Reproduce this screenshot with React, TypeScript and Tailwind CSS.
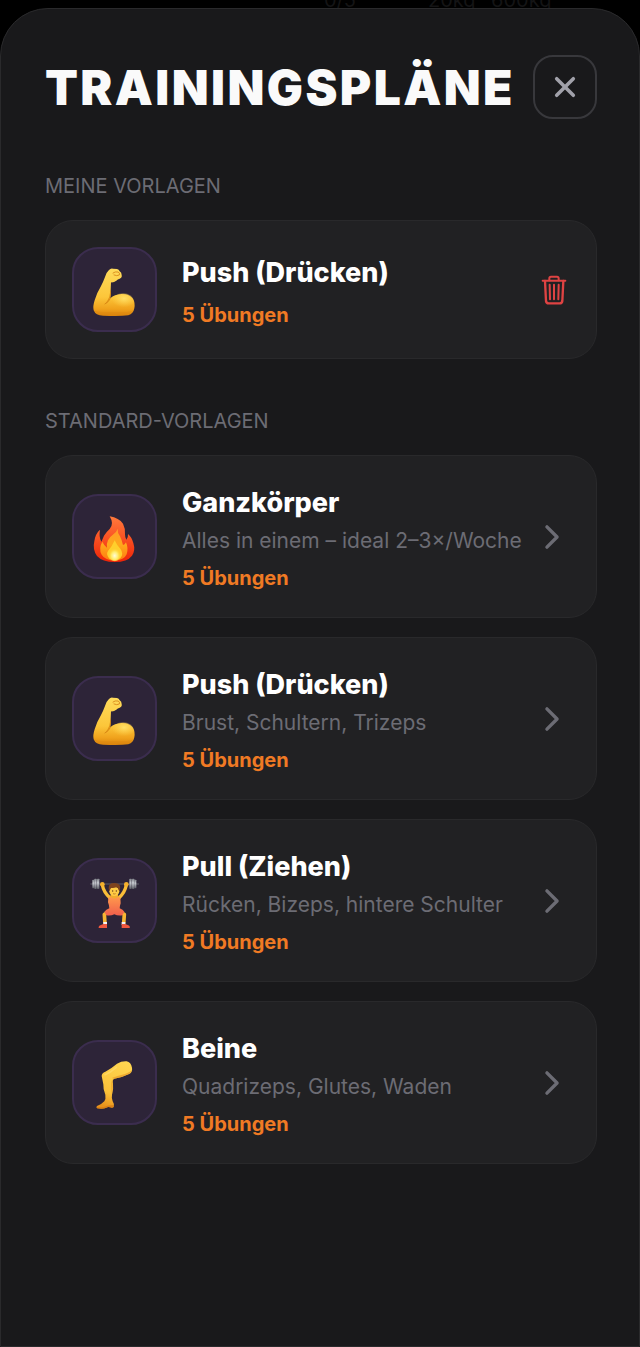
import React from 'react';
import { IoChevronForward, IoClose } from 'react-icons/io5';

type IconName = 'arm' | 'fire' | 'lifter' | 'leg';

interface Plan {
  id: string;
  name: string;
  description?: string;
  exercises: number;
  icon: IconName;
}

const myPlans: Plan[] = [
  { id: 'my-push', name: 'Push (Drücken)', exercises: 5, icon: 'arm' },
];

const defaultPlans: Plan[] = [
  { id: 'full', name: 'Ganzkörper', description: 'Alles in einem – ideal 2–3×/Woche', exercises: 5, icon: 'fire' },
  { id: 'push', name: 'Push (Drücken)', description: 'Brust, Schultern, Trizeps', exercises: 5, icon: 'arm' },
  { id: 'pull', name: 'Pull (Ziehen)', description: 'Rücken, Bizeps, hintere Schulter', exercises: 5, icon: 'lifter' },
  { id: 'legs', name: 'Beine', description: 'Quadrizeps, Glutes, Waden', exercises: 5, icon: 'leg' },
];

const TrashIcon = () => (
  <svg viewBox="55 191 96 96" className="size-8" fill="none" stroke="currentColor" strokeLinecap="round" strokeLinejoin="round" aria-hidden="true">
    <path d="M69 211 H137" strokeWidth="6" />
    <path d="M89 210 V204 Q89 199 94 199 H112 Q117 199 117 204 V210" strokeWidth="6" />
    <path d="M76 212 L79 272 Q80 279 87 279 H120 Q127 279 128 272 L131 212" strokeWidth="7" />
    <path d="M90 223 L91 267 M103 223 V267 M117 223 L116 267" strokeWidth="6" />
  </svg>
);

const ArmIcon = () => (
  <svg viewBox="89 86 150 150" className="size-[50px]" overflow="visible" aria-hidden="true">
    <defs>
      <linearGradient id="armSkin" x1="0" y1="0" x2="0" y2="1">
        <stop offset="0" stopColor="#ffdc5c" />
        <stop offset="0.6" stopColor="#fcc63a" />
        <stop offset="0.85" stopColor="#f0a21c" />
        <stop offset="1" stopColor="#d9820c" />
      </linearGradient>
      <radialGradient id="armBicep" cx="0.55" cy="0.35" r="0.6">
        <stop offset="0" stopColor="#ffe068" />
        <stop offset="1" stopColor="#ffd04a" stopOpacity="0" />
      </radialGradient>
    </defs>
    <path
      d="M146 101 Q151 95 158 97 L170 98 Q176 99 178 105 Q184 108 184 116 Q186 124 178 127 Q172 128 168 133 Q160 139 152 138 L150 186 Q162 174 184 173 Q208 173 218 187 Q225 199 222 216 Q219 232 204 237 Q180 240 128 238 Q106 238 100 222 Q97 210 103 192 Q110 168 121 151 Q129 136 134 122 Q138 108 146 101 Z"
      fill="url(#armSkin)"
    />
    <ellipse cx="188" cy="193" rx="32" ry="22" fill="url(#armBicep)" />
    <path d="M151 159 Q155 176 146 192 Q140 201 134 203 Q142 193 147 181 Z" fill="#dc8a12" opacity="0.85" />
    <path d="M134 203 Q144 198 150 187" fill="none" stroke="#d98a14" strokeWidth="3" strokeLinecap="round" />
    <path d="M158 110 Q164 105 173 107 Q180 110 177 116 Q170 120 161 116" fill="none" stroke="#dc9020" strokeWidth="3" strokeLinecap="round" />
    <path d="M101 222 Q108 236 130 236 L203 235 Q215 231 220 221 Q210 227 190 227 L130 227 Q112 228 101 222 Z" fill="#dd860e" opacity="0.4" />
  </svg>
);

const FireIcon = () => (
  <svg viewBox="89 85 150 150" className="size-[50px]" overflow="visible" aria-hidden="true">
    <defs>
      <linearGradient id="fireOuter" x1="0" y1="0" x2="0" y2="1">
        <stop offset="0" stopColor="#ff7a3c" />
        <stop offset="0.45" stopColor="#fa5424" />
        <stop offset="1" stopColor="#ee2408" />
      </linearGradient>
      <linearGradient id="fireInner" x1="0" y1="0" x2="0" y2="1">
        <stop offset="0" stopColor="#ff9a28" />
        <stop offset="0.5" stopColor="#ffa81c" />
        <stop offset="1" stopColor="#ff7a10" />
      </linearGradient>
      <radialGradient id="fireCore" cx="0.5" cy="0.65" r="0.5">
        <stop offset="0" stopColor="#fffbd8" />
        <stop offset="0.5" stopColor="#ffec6a" />
        <stop offset="1" stopColor="#ffc928" stopOpacity="0" />
      </radialGradient>
    </defs>
    <path
      d="M148 98 Q176 103 188 120 Q196 136 194 152 Q194 162 198 168 Q204 162 203 151 Q214 160 219 178 Q226 200 215 216 Q201 235 163 235 Q126 235 110 217 Q96 198 102 173 Q105 150 119 138 Q115 160 123 174 Q127 166 131 156 Q137 146 148 136 Q162 121 148 98 Z"
      fill="url(#fireOuter)"
    />
    <path
      d="M172 135 Q171 147 179 158 Q185 170 188 184 Q193 184 197 176 Q205 194 199 212 Q191 230 164 231 Q134 230 124 213 Q114 194 126 174 Q131 185 140 192 Q138 180 143 170 Q150 158 160 151 Q169 144 172 135 Z"
      fill="url(#fireInner)"
    />
    <path d="M163 170 Q169 184 180 195 Q191 210 180 224 Q164 234 147 225 Q136 212 143 202 Q155 189 163 170 Z" fill="#ffcf2c" />
    <ellipse cx="163" cy="209" rx="20" ry="24" fill="url(#fireCore)" />
  </svg>
);

const LifterIcon = () => (
  <svg viewBox="89 83 150 150" className="size-[50px]" overflow="visible" aria-hidden="true">
    <defs>
      <linearGradient id="plate" x1="0" y1="0" x2="0" y2="1">
        <stop offset="0" stopColor="#7c7f86" />
        <stop offset="0.4" stopColor="#c6c9cf" />
        <stop offset="1" stopColor="#5c5e66" />
      </linearGradient>
      <linearGradient id="suit" x1="0" y1="0" x2="0" y2="1">
        <stop offset="0" stopColor="#ff9a4c" />
        <stop offset="1" stopColor="#f05f4c" />
      </linearGradient>
    </defs>
    <path d="M90 107 H236" stroke="#77797f" strokeWidth="2" />
    <rect x="96" y="94" width="6" height="26" rx="2" fill="url(#plate)" />
    <rect x="102" y="91" width="7" height="31" rx="2" fill="url(#plate)" />
    <rect x="110" y="91" width="7" height="31" rx="2" fill="url(#plate)" />
    <rect x="207" y="91" width="7" height="31" rx="2" fill="url(#plate)" />
    <rect x="215" y="91" width="7" height="31" rx="2" fill="url(#plate)" />
    <rect x="222" y="94" width="6" height="26" rx="2" fill="url(#plate)" />
    {/* arms */}
    <path d="M126 110 Q130 132 150 150" fill="none" stroke="#f9bd38" strokeWidth="10" strokeLinecap="round" strokeLinejoin="round" />
    <path d="M198 110 Q194 132 175 150" fill="none" stroke="#f9bd38" strokeWidth="10" strokeLinecap="round" strokeLinejoin="round" />
    <circle cx="126" cy="108" r="7" fill="#f5b02c" />
    <circle cx="198" cy="108" r="7" fill="#f5b02c" />
    {/* legs */}
    <path d="M154 189 Q142 190 132 198 L134 226" fill="none" stroke="#f7b632" strokeWidth="11" strokeLinejoin="round" />
    <path d="M170 189 Q182 190 192 198 L190 226" fill="none" stroke="#f7b632" strokeWidth="11" strokeLinejoin="round" />
    <path d="M129 221 H140 V230 H129 Z M184 221 H195 V230 H184 Z" fill="#f2f2f4" />
    <path d="M129 227 H140 V239 H115 Q114 232 122 230 Z" fill="#f0583e" />
    <path d="M184 227 H195 L202 230 Q210 232 208 239 H184 Z" fill="#f0583e" />
    <path d="M144 148 Q162 140 180 148 L181 165 Q178 174 178 180 Q188 184 192 190 L186 201 Q172 203 162 198 Q152 203 138 201 L132 190 Q137 184 147 180 Q147 172 143 162 Z" fill="url(#suit)" />
    <path d="M149 144 Q162 158 175 144 L171 137 H153 Z" fill="#f2aa2e" />
    {/* head */}
    <ellipse cx="162" cy="129" rx="15" ry="14" fill="#ffcb45" />
    <path d="M146 127 Q142 109 154 105 Q164 102 173 106 Q183 111 178 127 L175 126 Q175 119 168 117 Q158 121 151 118 L149 126 Z" fill="#7d431e" />
    <circle cx="157" cy="128" r="2" fill="#5b351b" />
    <circle cx="168" cy="128" r="2" fill="#5b351b" />
    <path d="M158 136 Q162 138 166 136" fill="none" stroke="#a35c1c" strokeWidth="2" />
  </svg>
);

const LegIcon = () => (
  <svg viewBox="89 89 150 150" className="size-[50px]" overflow="visible" aria-hidden="true">
    <defs>
      <linearGradient id="legSkin" x1="0.7" y1="0" x2="0.4" y2="1">
        <stop offset="0" stopColor="#ffd650" />
        <stop offset="0.7" stopColor="#fbc139" />
        <stop offset="1" stopColor="#e8921c" />
      </linearGradient>
    </defs>
    <path
      d="M124 143 Q124 134 135 130 Q155 119 170 106 Q184 98 199 99 Q212 102 215 118 Q217 130 208 136 Q188 146 162 151 Q155 154 158 166 Q160 183 155 199 Q153 211 157 219 Q163 227 160 236 Q156 240 149 237 Q143 235 138 238 Q128 243 110 240 Q106 237 110 233 Q124 228 132 219 Q137 212 135 199 Q128 184 129 168 Z"
      fill="url(#legSkin)"
    />
    <path d="M162 151 Q188 146 208 136 Q214 132 214 126 Q208 133 194 137 Q174 142 156 148 Q156 151 162 151 Z" fill="#e9a02a" opacity="0.8" />
    <path d="M157 152 Q151 159 152 176 Q152 190 155 199 Q160 180 157 160 Z" fill="#eba42c" opacity="0.6" />
    <path d="M110 240 Q128 243 138 238 Q143 234 149 237 Q157 240 160 236 L160 231 Q150 230 141 232 Q128 238 110 236 Z" fill="#d67c14" opacity="0.8" />
    <path d="M134 139 Q150 133 168 117" fill="none" stroke="#ffe27a" strokeWidth="5" strokeLinecap="round" opacity="0.5" />
  </svg>
);

const icons: Record<IconName, React.FC> = {
  arm: ArmIcon,
  fire: FireIcon,
  lifter: LifterIcon,
  leg: LegIcon,
};

const cardClass =
  'flex w-full items-center rounded-[28px] border border-[#29292b] bg-[#212123] p-[26px] text-left';

const PlanContent: React.FC<{ plan: Plan }> = ({ plan }) => {
  const Icon = icons[plan.icon];
  return (
    <>
      <span className="flex size-[85px] shrink-0 items-center justify-center rounded-[26px] border-2 border-[#3b2d4e] bg-[#2d2438]">
        <Icon />
      </span>
      <span className="ml-[25px] flex min-w-0 flex-1 flex-col">
        <span className="text-[27px] leading-[42px] font-extrabold text-white">{plan.name}</span>
        {plan.description && (
          <span className="mt-px text-[21px] leading-8 whitespace-nowrap text-[#6c6c74]">{plan.description}</span>
        )}
        <span className="mt-[9px] text-xl leading-[25px] font-bold text-[#f07a24]">{plan.exercises} Übungen</span>
      </span>
    </>
  );
};

const SectionTitle: React.FC<{ children: React.ReactNode }> = ({ children }) => (
  <h2 className="text-xl leading-7 text-[#6c6c74] uppercase">{children}</h2>
);

export default function App() {
  return (
    <div className="relative flex min-h-screen flex-col overflow-hidden bg-black pt-2 font-['Inter',sans-serif]">
      {/* workout list behind the sheet */}
      <div className="absolute inset-x-0 -top-3 flex text-xl leading-6 text-[#141415]" aria-hidden="true">
        <span className="ml-[324px] w-[104px]">0/5</span>
        <span className="w-[63px]">20kg</span>
        <span>600kg</span>
      </div>

      <main className="relative flex flex-1 flex-col rounded-t-[48px] border border-[#2a2a2c] bg-[#19191b] pr-[42px] pb-11 pl-11">
        <header className="mt-[46px] flex items-start justify-between">
          <h1 className="text-[48px] leading-[66px] font-black tracking-wider text-[#fafafa]">TRAININGSPLÄNE</h1>
          <button
            type="button"
            aria-label="Schließen"
            className="flex size-16 shrink-0 items-center justify-center rounded-[20px] border-2 border-[#38383c] text-[#a1a1aa]"
          >
            <IoClose size={38} />
          </button>
        </header>

        <section className="mt-[51px]">
          <SectionTitle>Meine Vorlagen</SectionTitle>
          <ul className="mt-5 flex flex-col gap-[19px]">
            {myPlans.map(plan => (
              <li key={plan.id} className={cardClass}>
                <PlanContent plan={plan} />
                <button type="button" aria-label={`${plan.name} löschen`} className="shrink-0 text-[#df4343]">
                  <TrashIcon />
                </button>
              </li>
            ))}
          </ul>
        </section>

        <section className="mt-12">
          <SectionTitle>Standard-Vorlagen</SectionTitle>
          <ul className="mt-5 flex flex-col gap-[19px]">
            {defaultPlans.map(plan => (
              <li key={plan.id}>
                <button type="button" className={cardClass}>
                  <PlanContent plan={plan} />
                  <IoChevronForward size={36} className="shrink-0 text-[#6c6c74]" />
                </button>
              </li>
            ))}
          </ul>
        </section>
      </main>
    </div>
  );
}
